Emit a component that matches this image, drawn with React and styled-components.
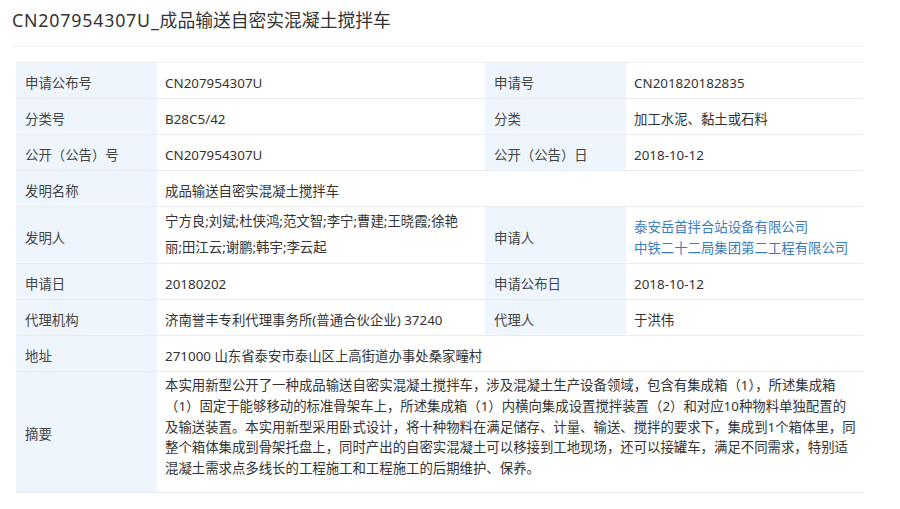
import styled, { createGlobalStyle } from "styled-components";

const GlobalStyle = createGlobalStyle`
    * {
        box-sizing: border-box;
    }

    body {
        margin: 0;
        background-color: #FFFFFF;
        font-family: "Noto Sans", "Noto Sans CJK SC", sans-serif;
        color: #333333;
    }
`

const abstractLines = [
    "本实用新型公开了一种成品输送自密实混凝土搅拌车，涉及混凝土生产设备领域，包含有集成箱（1），所述集成箱",
    "（1）固定于能够移动的标准骨架车上，所述集成箱（1）内横向集成设置搅拌装置（2）和对应10种物料单独配置的",
    "及输送装置。本实用新型采用卧式设计，将十种物料在满足储存、计量、输送、搅拌的要求下，集成到1个箱体里，同",
    "整个箱体集成到骨架托盘上，同时产出的自密实混凝土可以移接到工地现场，还可以接罐车，满足不同需求，特别适",
    "混凝土需求点多线长的工程施工和工程施工的后期维护、保养。",
]

export default function App() {
    return (
        <>
            <GlobalStyle />
            <Page>
                <Title><TitleCode>CN207954307U_</TitleCode>成品输送自密实混凝土搅拌车</Title>
                <Table>
                    <Row>
                        <Label>申请公布号</Label>
                        <Value>CN207954307U</Value>
                        <Label>申请号</Label>
                        <Value>CN201820182835</Value>
                    </Row>
                    <Row>
                        <Label>分类号</Label>
                        <Value>B28C5/42</Value>
                        <Label>分类</Label>
                        <Value>加工水泥、黏土或石料</Value>
                    </Row>
                    <Row>
                        <Label>公开（公告）号</Label>
                        <Value>CN207954307U</Value>
                        <Label>公开（公告）日</Label>
                        <Value>2018-10-12</Value>
                    </Row>
                    <Row>
                        <Label>发明名称</Label>
                        <Value $span={3}>成品输送自密实混凝土搅拌车</Value>
                    </Row>
                    <Row>
                        <Label>发明人</Label>
                        <Value $pad="1px 8px 3px">
                            <Names>
                                宁方良;刘斌;杜侠鸿;范文智;李宁;曹建;王晓霞;徐艳<br />
                                丽;田江云;谢鹏;韩宇;李云起
                            </Names>
                        </Value>
                        <Label>申请人</Label>
                        <Value>
                            <div>
                                <Applicant href="#">泰安岳首拌合站设备有限公司</Applicant>
                                <Applicant href="#">中铁二十二局集团第二工程有限公司</Applicant>
                            </div>
                        </Value>
                    </Row>
                    <Row>
                        <Label>申请日</Label>
                        <Value>20180202</Value>
                        <Label>申请公布日</Label>
                        <Value>2018-10-12</Value>
                    </Row>
                    <Row>
                        <Label>代理机构</Label>
                        <Value>济南誉丰专利代理事务所(普通合伙企业) 37240</Value>
                        <Label>代理人</Label>
                        <Value>于洪伟</Value>
                    </Row>
                    <Row>
                        <Label>地址</Label>
                        <Value $span={3}>271000 山东省泰安市泰山区上高街道办事处桑家疃村</Value>
                    </Row>
                    <Row>
                        <Label>摘要</Label>
                        <Value $span={3} $pad="3px 8px 13px" $align="flex-start">
                            <Abstract>
                                {abstractLines.map(line => <div key={line}>{line}</div>)}
                            </Abstract>
                        </Value>
                    </Row>
                </Table>
            </Page>
        </>
    )
}

const Page = styled.div`
    width: 863px;
    padding-left: 12px;
`

const Title = styled.h1`
    margin: 0;
    padding: 8px 0 13px 0;

    font-size: 17.8px;
    font-weight: normal;
    line-height: 25px;
    color: #333333;

    border-bottom: 1px solid #EEEEEE;
`

const TitleCode = styled.span`
    letter-spacing: 0.8px;
`

const Table = styled.div`
    width: 847px;
    margin: 15px 0 0 4px;

    overflow: hidden;
    border-top: 1px solid #EEEEEE;

    font-size: 13.4px;
`

const Row = styled.div`
    display: grid;
    grid-template-columns: 141px 328px 141px 237px;
`

const Label = styled.div`
    min-height: 36px;

    display: flex;
    align-items: center;

    padding: 5px 9px 0 9px;

    background-color: #EEF5FC;
    border-bottom: 1px solid #E9EDF1;

    line-height: 20px;
    color: #444444;
    white-space: nowrap;
`

const Value = styled.div`
    grid-column: ${({ $span }) => $span ? `span ${$span}` : 'auto'};
    min-height: 36px;

    display: flex;
    align-items: ${({ $align }) => $align || 'center'};

    padding: ${({ $pad }) => $pad || '5px 8px 0 8px'};

    border-bottom: 1px solid #EBEBEB;
    overflow: hidden;

    line-height: 20px;
    color: #333333;
    white-space: nowrap;
`

const Names = styled.div`
    line-height: 26px;
`

const Applicant = styled.a`
    display: block;

    line-height: 21px;
    color: #3B7DBF;
    text-decoration: none;
`

const Abstract = styled.div`
    line-height: 20.75px;
`
